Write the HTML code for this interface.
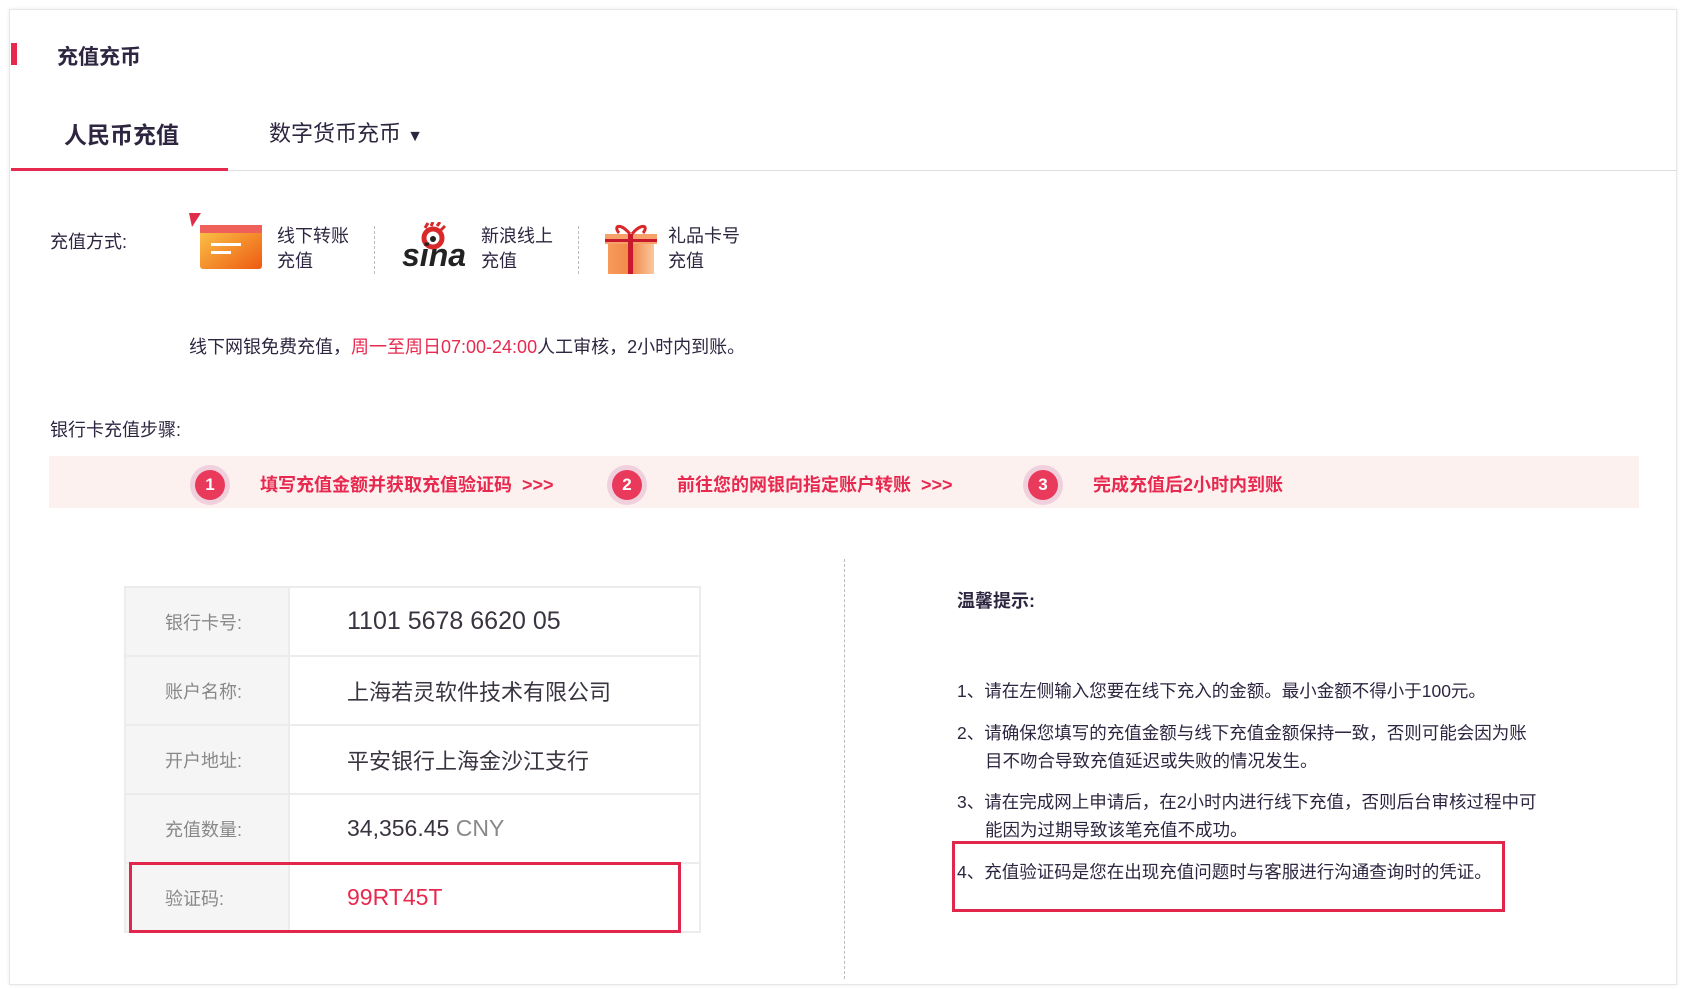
<!DOCTYPE html>
<html><head><meta charset="utf-8"><style>
*{margin:0;padding:0;box-sizing:border-box}
body{width:1686px;height:990px;background:#fff;font-family:"Liberation Sans","Noto Sans CJK SC",sans-serif;color:#2e2640;position:relative;overflow:hidden}
.a{position:absolute;white-space:nowrap}
.card{position:absolute;left:9px;top:9px;width:1668px;height:976px;border:1px solid #e6e6ea;box-shadow:0 0 4px rgba(0,0,0,.08)}
.red{color:#e8294f}
.sep{position:absolute;width:0;border-left:1px dashed #bbb}
.circ{position:absolute;width:40px;height:40px;border-radius:50%;background:#efd0dc;}
.circ b{position:absolute;left:5px;top:5px;width:30px;height:30px;border-radius:50%;background:#ea3a5c;color:#fff;font-size:17px;text-align:center;line-height:30px;font-weight:bold}
.st{position:absolute;font-size:18px;font-weight:bold;color:#e8294f;top:471px}
table{position:absolute;left:124px;top:586px;border-collapse:collapse;width:577px}
td{border:2px solid #ececec;height:69px;font-size:23px}
td.l{width:164px;background:#f5f5f5;color:#888;font-size:18px;padding-left:39px}
td.v{padding-left:57px;color:#3a3340}
td.v.red{color:#e8294f}
.tip{position:absolute;left:957px;font-size:17.5px;line-height:28px;color:#2e2640}
.tip span{padding-left:28px}
</style></head><body>
<div class="card"></div>
<div class="a" style="left:11px;top:43px;width:6px;height:22px;background:#e8294f"></div>
<div class="a" style="left:57px;top:41px;font-size:21px;font-weight:bold">充值充币</div>
<div class="a" style="left:64px;top:116px;font-size:23px;font-weight:bold">人民币充值</div>
<div class="a" style="left:269px;top:116px;font-size:22px">数字货币充币 <span style="font-size:16px">▼</span></div>
<div class="a" style="left:11px;top:170px;width:1666px;height:1px;background:#ddd"></div>
<div class="a" style="left:11px;top:168px;width:217px;height:3px;background:#e8294f"></div>

<div class="a" style="left:50px;top:228px;font-size:18px">充值方式:</div>
<svg class="a" style="left:189px;top:213px" width="80" height="60">
<defs><linearGradient id="g" x1="0" y1="0" x2="1" y2="1"><stop offset="0" stop-color="#fbc84a"/><stop offset="1" stop-color="#ee5a12"/></linearGradient>
<linearGradient id="g2" x1="0" y1="0" x2="1" y2="0"><stop offset="0" stop-color="#f79a5a"/><stop offset=".5" stop-color="#f0884a"/><stop offset="1" stop-color="#fbc79c"/></linearGradient></defs>
<polygon points="0,0 12,0 3,14" fill="#e02c4a"/>
<rect x="11" y="12" width="62" height="44" rx="3" fill="url(#g)"/>
<rect x="11" y="12" width="62" height="8" fill="#f0605a"/>
<rect x="22" y="30" width="30" height="3" fill="#fff"/><rect x="22" y="38" width="20" height="3" fill="#fff"/>
</svg>
<div class="a" style="left:277px;top:224px;font-size:18px;line-height:25px">线下转账<br>充值</div>
<div class="sep" style="left:374px;top:226px;height:48px"></div>
<svg class="a" style="left:400px;top:222px" width="70" height="50">
<circle cx="33" cy="16" r="9" fill="none" stroke="#d8282a" stroke-width="5"/>
<circle cx="33" cy="17" r="3" fill="#222"/>
<path d="M25 6 L28 1 M31 4 L33 0 M37 4 L40 0 M41 8 L45 4" stroke="#d8282a" stroke-width="3"/>
<text x="2" y="44" font-family="Liberation Sans" font-weight="bold" font-style="italic" font-size="32" fill="#222">sina</text>
</svg>
<div class="a" style="left:481px;top:224px;font-size:18px;line-height:25px">新浪线上<br>充值</div>
<div class="sep" style="left:578px;top:226px;height:48px"></div>
<svg class="a" style="left:605px;top:222px" width="52" height="52">
<rect x="3" y="16" width="46" height="36" fill="url(#g2)"/>
<rect x="0" y="12" width="52" height="10" fill="#f6a06a"/>
<rect x="23" y="12" width="5" height="40" fill="#c8182e"/>
<rect x="0" y="17" width="52" height="3" fill="#c8182e"/>
<path d="M25 12 C15 0 8 4 14 11 M27 12 C37 0 44 4 38 11" stroke="#d8282a" stroke-width="3" fill="none"/>
</svg>
<div class="a" style="left:668px;top:224px;font-size:18px;line-height:25px">礼品卡号<br>充值</div>

<div class="a" style="left:189px;top:333px;font-size:18px">线下网银免费充值，<span class="red">周一至周日07:00-24:00</span>人工审核，2小时内到账。</div>
<div class="a" style="left:50px;top:416px;font-size:18px">银行卡充值步骤:</div>
<div class="a" style="left:49px;top:456px;width:1590px;height:52px;background:#fdf1f0"></div>
<div class="circ" style="left:190px;top:465px"><b>1</b></div>
<div class="st" style="left:260px">填写充值金额并获取充值验证码 &nbsp;&gt;&gt;&gt;</div>
<div class="circ" style="left:607px;top:465px"><b>2</b></div>
<div class="st" style="left:677px">前往您的网银向指定账户转账 &nbsp;&gt;&gt;&gt;</div>
<div class="circ" style="left:1023px;top:465px"><b>3</b></div>
<div class="st" style="left:1093px">完成充值后2小时内到账</div>

<div class="sep" style="left:844px;top:559px;height:420px"></div>
<table>
<tr><td class="l">银行卡号:</td><td class="v" style="font-size:25px">1101 5678 6620 05</td></tr>
<tr><td class="l">账户名称:</td><td class="v" style="font-size:22px">上海若灵软件技术有限公司</td></tr>
<tr><td class="l">开户地址:</td><td class="v" style="font-size:22px">平安银行上海金沙江支行</td></tr>
<tr><td class="l">充值数量:</td><td class="v">34,356.45 <span style="color:#888">CNY</span></td></tr>
<tr><td class="l">验证码:</td><td class="v red">99RT45T</td></tr>
</table>
<div class="a" style="left:129px;top:862px;width:552px;height:71px;border:3px solid #e0264a"></div>

<div class="a" style="left:957px;top:587px;font-size:18px;font-weight:bold">温馨提示:</div>
<div class="tip" style="top:677px">1、请在左侧输入您要在线下充入的金额。最小金额不得小于100元。</div>
<div class="tip" style="top:719px">2、请确保您填写的充值金额与线下充值金额保持一致，否则可能会因为账<br><span>目不吻合导致充值延迟或失败的情况发生。</span></div>
<div class="tip" style="top:788px">3、请在完成网上申请后，在2小时内进行线下充值，否则后台审核过程中可<br><span>能因为过期导致该笔充值不成功。</span></div>
<div class="tip" style="top:858px">4、充值验证码是您在出现充值问题时与客服进行沟通查询时的凭证。</div>
<div class="a" style="left:952px;top:841px;width:553px;height:71px;border:3px solid #e0264a"></div>
</body></html>
